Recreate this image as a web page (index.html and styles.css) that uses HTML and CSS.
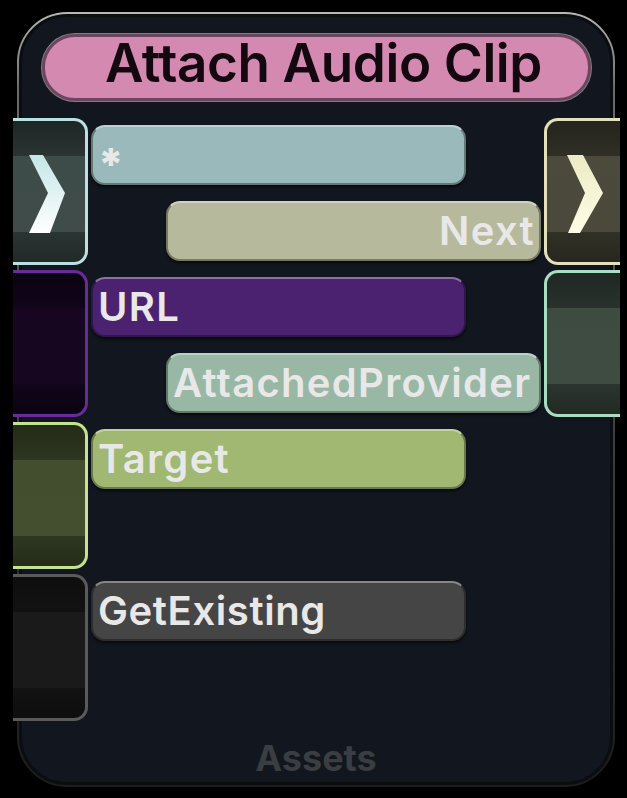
FILE: index.html
```html
<!DOCTYPE html>
<html>
<head>
<meta charset="utf-8">
<link rel="stylesheet" href="styles.css">
</head>
<body>
<div class="panel">
  <div class="panel-inner">
    <div class="title">Attach Audio Clip</div>
    <div class="rows">
      <div class="row">
        <div class="conn conn-left c-cyan">
          <svg class="chev" viewBox="0 0 72 141" width="72" height="141"><defs><linearGradient id="gc" x1="0" y1="0" x2="0" y2="1"><stop offset="0" stop-color="#c4e6e6"/><stop offset="1" stop-color="#ffffff"/></linearGradient></defs><polygon points="16,34 30,34 52,72 37,112 16,112 35,72" fill="url(#gc)"/></svg>
        </div>
        <div class="pills">
          <div class="pill p-star">*</div>
          <div class="pill p-next indent right">Next</div>
        </div>
        <div class="conn conn-right c-cream">
          <svg class="chev" viewBox="0 0 73 141" width="73" height="141"><defs><linearGradient id="gy" x1="0" y1="0" x2="0" y2="1"><stop offset="0" stop-color="#ecebc4"/><stop offset="1" stop-color="#fffde6"/></linearGradient></defs><polygon points="20,34 36,34 56,72 33,112 21,112 38,72" fill="url(#gy)"/></svg>
        </div>
      </div>
      <div class="row">
        <div class="conn conn-left c-purple"></div>
        <div class="pills">
          <div class="pill p-url">URL</div>
          <div class="pill p-ap indent">AttachedProvider</div>
        </div>
        <div class="conn conn-right c-mint"></div>
      </div>
      <div class="row">
        <div class="conn conn-left c-green"></div>
        <div class="pills">
          <div class="pill p-target">Target</div>
        </div>
        <div class="spacer"></div>
      </div>
      <div class="row">
        <div class="conn conn-left c-gray"></div>
        <div class="pills">
          <div class="pill p-get">GetExisting</div>
        </div>
        <div class="spacer"></div>
      </div>
    </div>
    <div class="footer">Assets</div>
  </div>
</div>
</body>
</html>
```
FILE: styles.css
```css
html, body {
  margin: 0;
  padding: 0;
  background: #000;
}
body {
  width: 627px;
  height: 798px;
  overflow: hidden;
  font-family: "Inter", "DejaVu Sans", sans-serif;
}
.panel {
  margin: 12px 0 0 17px;
  width: 598px;
  height: 775px;
  box-sizing: border-box;
  padding: 2px;
  border-radius: 50px;
  background: linear-gradient(to bottom, #b8b8b8 0%, #6a6a6a 10%, #3a3a3a 60%, #1c1c1c 100%);
}
.panel-inner {
  height: 100%;
  box-sizing: border-box;
  border-radius: 48px;
  background: #12161e;
  border: 3px solid #0b0d11;
  padding: 17px 0 0 0;
  display: flex;
  flex-direction: column;
}
.title {
  margin: 0 0 0 20px;
  width: 549px;
  height: 67px;
  box-sizing: border-box;
  border-radius: 33px;
  background: #d48ab0;
  border: 3px solid #6c4660;
  box-shadow: 0 0 0 1px #7e7e7e;
  color: #140810;
  font-weight: 600;
  font-size: 53px;
  letter-spacing: -0.4px;
  padding: 0 0 8px 14px;
  display: flex;
  align-items: center;
  justify-content: center;
  line-height: 1;
}
.rows {
  margin: 17px 0 0 -9px;
  width: 607px;
  display: flex;
  flex-direction: column;
  gap: 5px;
}
.row {
  height: 147px;
  display: grid;
  grid-template-columns: 75px 450px 76px;
  column-gap: 3px;
}
.conn {
  box-sizing: border-box;
  height: 147px;
  border: 3px solid;
}
.conn-left {
  border-left: none;
  border-radius: 0 14px 14px 0;
}
.conn-right {
  border-right: none;
  border-radius: 14px 0 0 14px;
}
.chev {
  display: block;
}
.c-cyan {
  border-color: #b9e1e1;
  background: linear-gradient(to bottom, #1e2624 0%, #2a3432 25%, #3d4b49 25%, #3f4c4a 79%, #2a3432 79%, #222a28 100%);
}
.c-cream {
  border-color: #e2e1bb;
  background: linear-gradient(to bottom, #25241d 0%, #302f26 25%, #4b4a3c 25%, #4a493b 79%, #313026 79%, #28271f 100%);
}
.c-purple {
  border-color: #6a2a9e;
  background: linear-gradient(to bottom, #0b0310 0%, #10051a 25%, #16061f 25%, #16061f 79%, #10051a 79%, #0b0310 100%);
}
.c-mint {
  border-color: #a9ddc3;
  background: linear-gradient(to bottom, #1f2722 0%, #29322c 25%, #3d4b41 25%, #3e4c42 79%, #2b342e 79%, #222a24 100%);
}
.c-green {
  border-color: #c3e48c;
  background: linear-gradient(to bottom, #242b18 0%, #2d3620 25%, #424e2e 25%, #434f2f 79%, #2e3820 79%, #252c19 100%);
}
.c-gray {
  border-color: #5a5a5a;
  background: linear-gradient(to bottom, #0e0e0e 0%, #121212 25%, #1a1a1a 25%, #1a1a1a 79%, #121212 79%, #0e0e0e 100%);
}
.pills {
  display: flex;
  flex-direction: column;
  gap: 16px;
  padding-top: 7px;
}
.pill {
  width: 375px;
  height: 60px;
  box-sizing: border-box;
  border-radius: 14px;
  border: 2px solid rgba(0, 0, 0, 0.35);
  border-top-color: rgba(255, 255, 255, 0.35);
  box-shadow: 0 2px 3px rgba(0, 0, 0, 0.6);
  color: #e8e8e8;
  font-weight: 600;
  font-size: 40px;
  letter-spacing: 1.3px;
  line-height: 1;
  padding: 0 5px;
  display: flex;
  align-items: center;
}
.indent {
  margin-left: 75px;
}
.right {
  justify-content: flex-end;
  padding-right: 4px;
}
.p-star { background: #9ab9ba; font-size: 44px; font-weight: 800; padding-top: 18px; }
.p-next { background: #b7b99c; }
.p-url { background: #4b2270; }
.p-ap { background: #98b8a5; }
.p-target { background: #a0b872; }
.p-get { background: #454545; letter-spacing: 0.6px; }
.spacer {
  height: 147px;
}
.footer {
  margin-top: auto;
  margin-bottom: 6px;
  text-align: center;
  color: #3a3d42;
  font-weight: 700;
  font-size: 36px;
  line-height: 1;
}
```
